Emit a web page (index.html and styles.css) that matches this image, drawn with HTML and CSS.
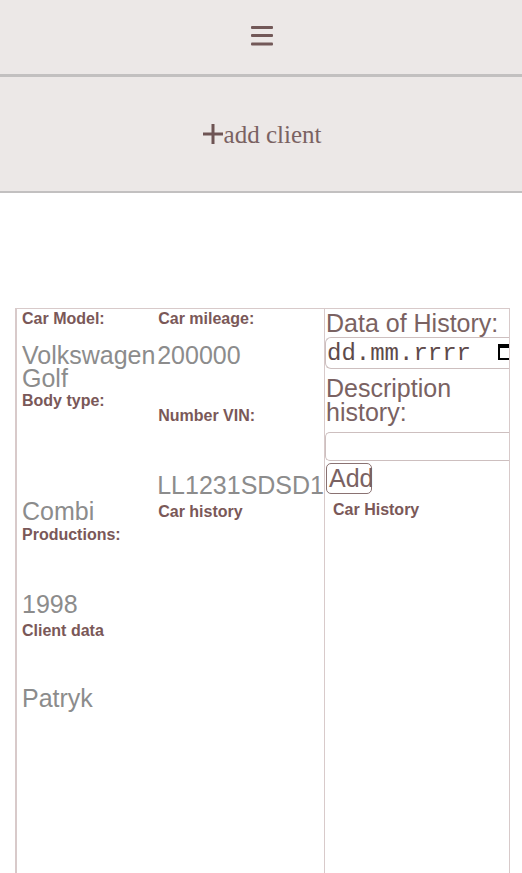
FILE: index.html
```html
<!DOCTYPE html>
<html lang="pl">
<head>
<meta charset="utf-8">
<title>Car details</title>
<link rel="stylesheet" href="styles.css">
</head>
<body>
<header class="topbar">
  <button class="menu-btn" type="button" aria-label="menu">
    <svg width="22" height="21" viewBox="0 0 22 21"><rect x="0" y="1" width="22" height="3" rx="1"/><rect x="0" y="9" width="22" height="3" rx="1"/><rect x="0" y="17.5" width="22" height="3" rx="1"/></svg>
  </button>
</header>
<nav class="actionbar">
  <a class="add-client" href="#"><svg class="plus" width="20" height="20" viewBox="0 0 20 20"><rect x="0" y="8.5" width="20" height="3"/><rect x="8.5" y="0" width="3" height="20"/></svg>add client</a>
</nav>
<main class="panel">
  <section class="details">
    <div class="col col-a">
      <div class="label first">Car Model:</div>
      <div class="value model">Volkswagen Golf</div>
      <div class="label body-label">Body type:</div>
      <div class="value body">Combi</div>
      <div class="label prod-label">Productions:</div>
      <div class="value year">1998</div>
      <div class="label client-label">Client data</div>
      <div class="value client">Patryk</div>
    </div>
    <div class="col col-b">
      <div class="label first">Car mileage:</div>
      <div class="value model">200000</div>
      <div class="label vin-label">Number VIN:</div>
      <div class="value vin">LL1231SDSD1</div>
      <div class="label hist-label">Car history</div>
    </div>
  </section>
  <section class="history">
    <div class="h-title">Data of History:</div>
    <div class="date-field"><span>dd.mm.rrrr</span><svg class="cal" width="11" height="16" viewBox="0 0 11 16"><rect x="1" y="1.5" width="12" height="13.5" fill="none" stroke="#000" stroke-width="2"/><rect x="0" y="0" width="12" height="4" fill="#000"/></svg></div>
    <div class="h-title desc">Description history:</div>
    <div class="text-field"></div>
    <button class="add-btn" type="button">Add</button>
    <div class="label hist-title">Car History</div>
  </section>
</main>
</body>
</html>
```
FILE: styles.css
```css
* { box-sizing: border-box; }
html, body { margin: 0; padding: 0; background: #fff; }
body { font-family: "Liberation Sans", Arial, sans-serif; overflow: hidden; }

.topbar {
  height: 77px;
  background: #ece8e7;
  border-bottom: 3px solid #c2c0c0;
  display: flex;
  justify-content: center;
  align-items: flex-start;
}
.menu-btn {
  margin-top: 25px;
  margin-left: 2px;
  padding: 0;
  border: 0;
  background: none;
  display: flex;
}
.menu-btn svg { fill: #725858; }

.actionbar {
  height: 116px;
  background: #ece8e7;
  border-bottom: 2px solid #c2c0c0;
  display: flex;
  justify-content: center;
  align-items: center;
}
.add-client {
  display: flex;
  align-items: center;
  font-family: "Liberation Serif", "Times New Roman", serif;
  font-size: 25px;
  color: #7a6262;
  text-decoration: none;
  margin-left: 2px;
  margin-top: 2px;
}
.plus { fill: #6e5454; margin-right: 1px; margin-top: -2px; }

.panel {
  margin: 115px 12px 0 15px;
  height: 600px;
  border: 1px solid #d8caca;
  border-left-width: 2px;
  border-bottom: 0;
  display: flex;
}
.details {
  width: 308px;
  display: flex;
  border-right: 1px solid #d8caca;
  padding-left: 5px;
}
.col { display: flex; flex-direction: column; }
.col-a { width: 137px; }
.col-b { flex: 1; }

.label {
  font-size: 16px;
  line-height: 18px;
  font-weight: bold;
  color: #7a5858;
}
.value {
  font-size: 25px;
  line-height: 23px;
  color: #8c8c8c;
}
.label.first { margin-top: 1px; }
.value.model { margin-top: 16px; }
.body-label { margin-top: 2px; }
.value.body { margin-top: 90px; }
.prod-label { margin-top: 3px; }
.value.year { margin-top: 49px; }
.client-label { margin-top: 6px; }
.value.client { margin-top: 47px; }
.vin-label { margin-top: 40px; margin-left: 1px; }
.value.vin { margin-top: 49px; }
.hist-label { margin-top: 6px; margin-left: 1px; }
.col-b .label.first { margin-left: 1px; }

.history {
  flex: 1;
  display: flex;
  flex-direction: column;
  align-items: flex-start;
  overflow: hidden;
}
.h-title {
  font-size: 25px;
  line-height: 24px;
  color: #7a6262;
  margin-top: 2px;
  padding-left: 1px;
}
.h-title.desc { margin-top: 7px; width: 170px; }
.date-field {
  margin-top: 2px;
  width: 100%;
  height: 32px;
  border: 1px solid #cdbfbf;
  border-right: 0;
  border-radius: 6px 0 0 6px;
  display: flex;
  align-items: center;
  justify-content: space-between;
  padding-left: 1px;
  font-family: "Liberation Mono", "Courier New", monospace;
  font-size: 24px;
  color: #5e4a4a;
}
.cal { margin-top: -2px; }
.text-field {
  margin-top: 8px;
  width: 100%;
  height: 29px;
  border: 1px solid #cdbfbf;
  border-right: 0;
  border-radius: 5px 0 0 5px;
}
.add-btn {
  margin-top: 2px;
  margin-left: 1px;
  width: 46px;
  height: 31px;
  padding: 0 0 0 2px;
  border: 1px solid #8a7272;
  border-radius: 5px;
  background: #fff;
  font-family: "Liberation Sans", Arial, sans-serif;
  font-size: 25px;
  line-height: 29px;
  color: #7a6262;
  text-align: left;
  white-space: nowrap;
  overflow: visible;
}
.hist-title { margin-top: 7px; margin-left: 8px; }
```
